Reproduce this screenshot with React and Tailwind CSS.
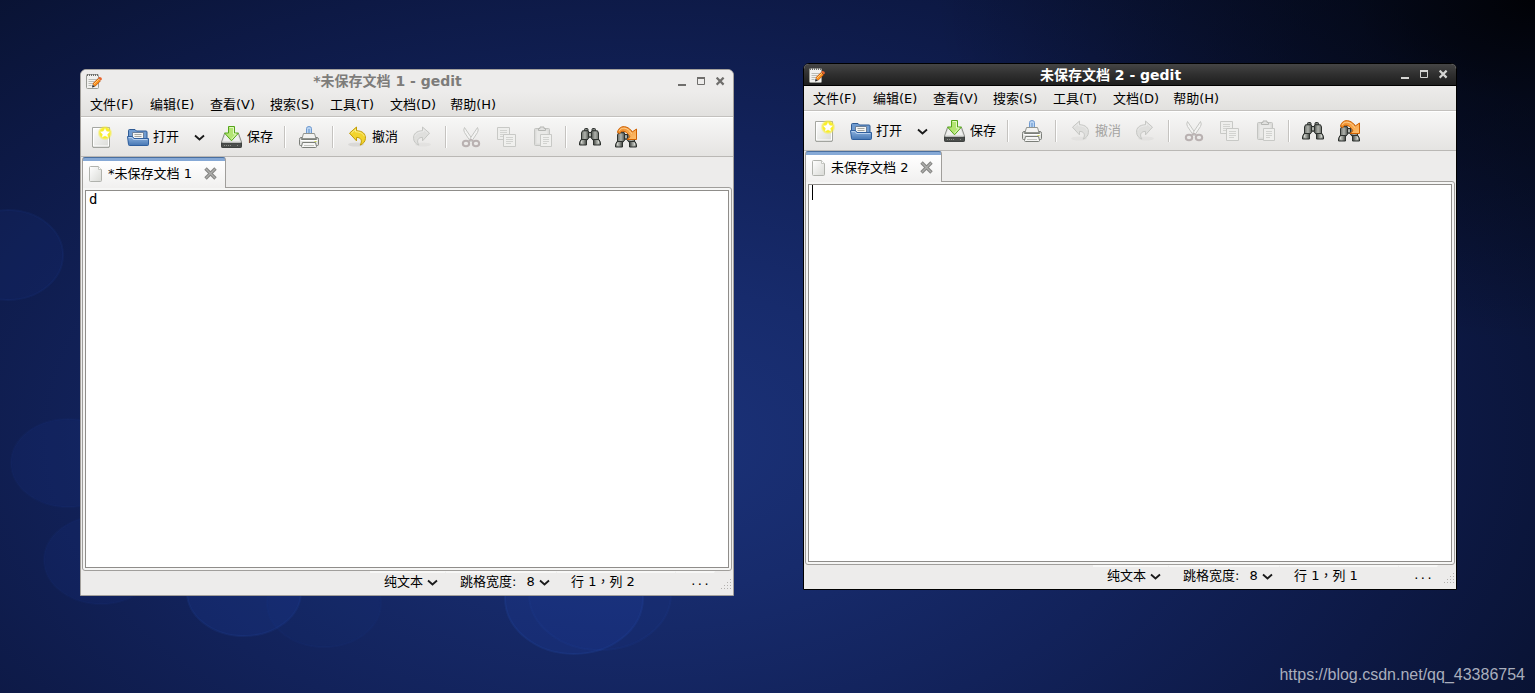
import React, { useState } from 'react';
import clsx from 'clsx';

const MENUS = ['文件(F)', '编辑(E)', '查看(V)', '搜索(S)', '工具(T)', '文档(D)', '帮助(H)'];

function Wallpaper() {
  return (
    <svg className="absolute inset-0 h-full w-full" viewBox="0 0 1535 693" preserveAspectRatio="none" aria-hidden="true">
      <defs>
        <radialGradient id="glow" gradientUnits="userSpaceOnUse" cx="0" cy="0" r="1" gradientTransform="translate(640 440) scale(1060 620)">
          <stop offset="0" stopColor="#1b3279" />
          <stop offset="0.25" stopColor="#172b6c" />
          <stop offset="0.5" stopColor="#12225a" />
          <stop offset="0.75" stopColor="#0d1945" />
          <stop offset="1" stopColor="#08112e" />
        </radialGradient>
        <radialGradient id="corner" gradientUnits="userSpaceOnUse" cx="0" cy="0" r="1" gradientTransform="translate(1535 0) scale(600 340)">
          <stop offset="0" stopColor="#010206" />
          <stop offset="0.3" stopColor="#010206" stopOpacity="0.5" />
          <stop offset="1" stopColor="#010206" stopOpacity="0" />
        </radialGradient>
      </defs>
      <rect width="1535" height="693" fill="url(#glow)" />
      <rect width="1535" height="693" fill="url(#corner)" />
      <g fill="#1d3c96" fillOpacity="0.14" stroke="#2a4fae" strokeOpacity="0.1" strokeWidth="2">
        <ellipse cx="8" cy="255" rx="55" ry="45" />
        <ellipse cx="68" cy="463" rx="57" ry="44" strokeOpacity="0.05" />
        <ellipse cx="101" cy="560" rx="57" ry="44" strokeOpacity="0.05" />
        <ellipse cx="244" cy="592" rx="57" ry="44" fillOpacity="0.25" strokeOpacity="0.15" />
        <ellipse cx="324" cy="603" rx="57" ry="44" fillOpacity="0.08" strokeOpacity="0.05" />
        <ellipse cx="574" cy="598" rx="69" ry="56" fillOpacity="0.3" strokeOpacity="0.2" />
        <ellipse cx="600" cy="594" rx="71" ry="56" />
      </g>
    </svg>
  );
}

function IconDefs() {
  return (
    <svg className="absolute h-0 w-0" aria-hidden="true">
      <defs>
        <linearGradient id="paper" x1="0" y1="0" x2="1" y2="1">
          <stop offset="0" stopColor="#ffffff" />
          <stop offset="1" stopColor="#d9dad6" />
        </linearGradient>
        <radialGradient id="star">
          <stop offset="0" stopColor="#fff800" />
          <stop offset="0.65" stopColor="#f9ef2a" />
          <stop offset="1" stopColor="#f6ec50" stopOpacity="0" />
        </radialGradient>
        <linearGradient id="folder" x1="0" y1="0" x2="0" y2="1">
          <stop offset="0" stopColor="#8fb3de" />
          <stop offset="1" stopColor="#4677b4" />
        </linearGradient>
        <linearGradient id="metal" x1="0" y1="0" x2="1" y2="0">
          <stop offset="0" stopColor="#6c706b" />
          <stop offset="0.45" stopColor="#b0b3ad" />
          <stop offset="1" stopColor="#3e423e" />
        </linearGradient>
        <linearGradient id="orange" x1="0" y1="0" x2="1" y2="1">
          <stop offset="0" stopColor="#f08a24" />
          <stop offset="1" stopColor="#fdc070" />
        </linearGradient>
      </defs>
    </svg>
  );
}

function Icon({ children, size = 24, className }) {
  return (
    <svg width={size} height={size} viewBox={`0 0 ${size} ${size}`} className={clsx('shrink-0', className)} aria-hidden="true">
      {children}
    </svg>
  );
}

const GeditIcon = () => (
  <Icon size={16}>
    <rect x="0.5" y="1.5" width="12" height="14" rx="1" fill="#f1f1ef" stroke="#9a9c96" />
    <path d="M1 2h11" stroke="#6d6d6b" strokeWidth="2" strokeDasharray="1 1" />
    <path d="M2.5 6.5h8M2.5 8.5h6M2.5 10.5h4M2.5 12.5h3" stroke="#b9bbb6" />
    <path d="M7.8 12.2l5.6-5.6" stroke="#b54a00" strokeWidth="4" />
    <path d="M8 12l5.3-5.3" stroke="#fb9422" strokeWidth="2.8" />
    <path d="M7.8 11.2l5-5" stroke="#ffd083" strokeWidth="0.9" />
    <path d="M12.2 5l2.6 2.6 1-1q.3-1.2-.6-2t-2-.6z" fill="#e8642c" />
    <path d="M6 14.4l.6-3 2.4 2.400z" fill="#2a2a2a" />
  </Icon>
);

const NewIcon = () => (
  <Icon>
    <path d="M2.5 2.5h17v19.5h-17z" fill="url(#paper)" stroke="#a5a7a1" />
    <path d="M3.5 3.5h15v17.5h-15z" fill="none" stroke="#fff" />
    <path d="M3 22.5h16" stroke="#7d7f7a" strokeOpacity="0.5" />
    <circle cx="15" cy="8" r="7.5" fill="url(#star)" />
    <path d="M15 2.8l1.7 3.3 3.7.5-2.7 2.6.7 3.7-3.4-1.8-3.4 1.8.7-3.700-2.700-2.600 3.700-.5z" fill="#fff" stroke="#f5ea4a" strokeWidth="0.6" />
  </Icon>
);

const OpenIcon = () => (
  <Icon>
    <path d="M2.5 18V5.5q0-1 1-1h5.5l1.5 1.5h9.5q1 0 1 1V18z" fill="#6f9bd0" stroke="#2f5b94" />
    <path d="M6.5 7.5h11v8h-11z" fill="#f5f5f3" stroke="#6a7f99" />
    <path d="M8.5 9.5h7M8.5 11.5h7" stroke="#a3a5a0" />
    <path d="M1.5 11.5h5l1.5 2h14.5v6q0 1-1 1h-18q-1 0-1-1z" fill="url(#folder)" stroke="#2f5f9e" />
    <path d="M2.500 12.500h3.400l1.500 2h14" fill="none" stroke="#b7d0ee" />
  </Icon>
);

const SaveIcon = () => (
  <Icon>
    <path d="M4.5 8.5h14l3 8.5v4.5q0 1-1 1h-18q-1 0-1-1V17z" fill="#dcdddb" stroke="#898b86" />
    <path d="M5.5 9.5h12l2.3 6.5H3z" fill="#efefee" />
    <path d="M1.5 18h20v3.5q0 1-1 1h-18q-1 0-1-1z" fill="#4b4e4c" stroke="#3e4140" />
    <path d="M2.5 17.5h18" stroke="#b9bbb8" />
    <path d="M4 20.5h8M17 20.5h2" stroke="#8b8e8a" strokeDasharray="1 1" />
    <path d="M8.5 1.5h6v6.5h4l-7 7.8-7-7.8h4z" fill="#b3e573" stroke="#55a51a" />
    <path d="M9.5 2.5h4v6.500h2.700l-4.700 5.300" fill="none" stroke="#e4fac4" />
  </Icon>
);

const PrintIcon = () => (
  <Icon>
    <path d="M9.5 9V3.5q0-2 2.500-2t2.500 2V9z" fill="#b9d4f2" stroke="#6f9ad0" />
    <path d="M12 4v4" stroke="#5f8fca" />
    <path d="M6.5 8.5h11l1.5 5H5z" fill="#f3f3f1" stroke="#92958f" />
    <path d="M2.5 14.5q0-2 1.500-2h1l-.5 2h15l-.5-2h1q1.500 0 1.500 2v5q0 1-1 1h-17q-1 0-1-1z" fill="#e3e4e1" stroke="#7b7e79" />
    <path d="M3.5 15.5h17" stroke="#fff" />
    <path d="M17.5 16.5h2" stroke="#cfd85a" />
    <path d="M5.5 17.5h13l1 4q0 1-1 1h-13q-1 0-1-1z" fill="#f6f6f5" stroke="#7b7e79" />
    <path d="M7 20.5h10" stroke="#c2c4bf" />
  </Icon>
);

const UndoIcon = ({ flip, disabled }) => (
  <Icon className={flip && '-scale-x-100'}>
    <ellipse cx="11" cy="19.5" rx="8" ry="2" fill="#000" fillOpacity={disabled ? 0.03 : 0.07} />
    <path
      d="M4.500 8.200l7-6.200v3.700c6.200.2 9.300 3.300 8.900 7.900-.2 3-2 5.200-5.300 6.500 1.400-2.400 1.700-4.200.8-5.700-.8-1.400-2.200-2-4.400-2v3.500z"
      fill={disabled ? '#dfdfdd' : '#f2d42e'}
      stroke={disabled ? '#c6c7c4' : '#c29c06'}
      strokeLinejoin="round"
    />
    <path d="M6.200 8.200l4.300-3.800v2.400c5 .1 8 2 8.700 4.600" fill="none" stroke={disabled ? '#ebebea' : '#fbef8e'} />
  </Icon>
);

const CutIcon = () => (
  <Icon>
    <path d="M6.5 2.5q-1.500 2.500 0 5l6 9 1.800-2.300z" fill="#f3f3f2" stroke="#c6c7c4" />
    <path d="M19.500 2.500q1.500 2.500 0 5l-6 9-1.800-2.300z" fill="#f3f3f2" stroke="#c6c7c4" />
    <ellipse cx="8" cy="18.5" rx="3.2" ry="2.8" fill="none" stroke="#b9b1b1" strokeWidth="2" />
    <ellipse cx="18" cy="18.5" rx="3.2" ry="2.8" fill="none" stroke="#b9b1b1" strokeWidth="2" />
    <path d="M10.500 16.500l2.500-2 2.500 2" fill="none" stroke="#b9b1b1" strokeWidth="1.5" />
  </Icon>
);

const CopyIcon = () => (
  <Icon>
    <path d="M3.5 2.5h12v12h-12z" fill="#eeeeec" stroke="#c8c9c6" />
    <path d="M6 5.5h7M6 7.5h7M6 9.5h5M6 11.5h5" stroke="#d2d3d0" />
    <path d="M9.5 9.5h12v12h-12z" fill="#f0f0ee" stroke="#c8c9c6" />
    <path d="M12 12.5h7M12 14.5h7M12 16.5h7M12 18.5h5" stroke="#d2d3d0" />
  </Icon>
);

const PasteIcon = () => (
  <Icon>
    <path d="M5.5 3.5h13q1 0 1 1v15q0 1-1 1h-13q-1 0-1-1v-15q0-1 1-1z" fill="#dcdcda" stroke="#c3c4c1" />
    <path d="M6.5 5.5h11v13h-11z" fill="#e9e9e7" />
    <path d="M8.5 5.5v-2h1.500v-1.500h4v1.500h1.500v2z" fill="#e2e2e0" stroke="#b5b6b3" />
    <path d="M10.5 9.5h11v12h-11z" fill="#f0f0ee" stroke="#c8c9c6" />
    <path d="M13 12.5h6M13 14.5h6M13 16.5h6M13 18.5h4" stroke="#d2d3d0" />
  </Icon>
);

const Barrel = () => (
  <>
    <path d="M6.5 6V4.500q0-1 1-1h1.500q1 0 1 1V6z" fill="#7d817c" />
    <path d="M4.500 5.800h5.500l1.200 1.500v5l-2 2.700H3.500V8z" fill="url(#metal)" />
    <path d="M3 14.500h5.500v5.500H1.500v-2.500z" fill="url(#metal)" />
    <path d="M3.5 16v2.5" stroke="#e2e4df" strokeOpacity="0.8" />
  </>
);

const Binoculars = () => (
  <g stroke="#2d312e" strokeLinejoin="round">
    <Barrel />
    <g transform="translate(24 0) scale(-1 1)">
      <Barrel />
    </g>
    <path d="M10.5 7.5h3v4.500h-3z" fill="#8f938d" />
    <path d="M12 8.5v2.5" stroke="#d0d3cd" />
  </g>
);

const FindIcon = () => (
  <Icon>
    <Binoculars />
  </Icon>
);

const ReplaceIcon = () => (
  <Icon>
    <g transform="translate(0 2)">
      <Binoculars />
    </g>
    <path
      d="M3.500 7.500C4 3 8 .7 12 2c3 .9 4.800 2.700 6.200 5l4.300-3v10.500h-9.500l3-2.700c-2-3.500-4.400-5.600-7-5.600-2 0-2.700 1-3 2.300z"
      fill="url(#orange)"
      stroke="#cf6100"
      strokeLinejoin="round"
    />
    <path d="M5.200 5.800C7 2.800 10.500 2.600 13 4c2 1 3.500 2.800 4.700 4.700" fill="none" stroke="#ffdca8" strokeOpacity="0.8" />
  </Icon>
);

const PageIcon = () => (
  <svg width="14" height="16" viewBox="0 0 14 16" className="shrink-0" aria-hidden="true">
    <path d="M1.500.5h8l3 3v11q0 1-1 1h-10q-1 0-1-1v-13q0-1 1-1z" fill="url(#paper)" stroke="#b0b2ad" />
    <path d="M9.500.5v3h3" fill="#fff" stroke="#c4c6c1" />
  </svg>
);

const Chevron = () => (
  <svg width="11" height="7" viewBox="0 0 11 7" className="shrink-0" aria-hidden="true">
    <path d="M1 1.500l4.500 4 4.500-4" fill="none" stroke="#1a1a1a" strokeWidth="1.8" />
  </svg>
);

function TitleBar({ title, active }) {
  const ink = active ? '#d5d5d3' : '#6f6e6c';
  return (
    <header
      className={clsx(
        'flex h-[22px] items-center pr-[3px] pl-[5px]',
        active ? 'border-b border-black bg-linear-to-b from-[#454545] via-[#2f2f2f] to-[#1f1f1f]' : 'bg-[#edeceb]'
      )}
    >
      <GeditIcon />
      <h1 className={clsx('flex-1 text-center text-sm leading-5 font-bold', active ? 'text-white' : 'text-[#7d7c7a]')}>
        {title} - gedit
      </h1>
      <button type="button" aria-label="Minimize" className="flex h-5 w-[19px] items-center justify-center">
        <Icon size={9}>
          <path d="M0 8h8" stroke={ink} strokeWidth="2" />
        </Icon>
      </button>
      <button type="button" aria-label="Maximize" className="flex h-5 w-[19px] items-center justify-center">
        <Icon size={9}>
          <path d="M0 1h8" stroke={ink} strokeWidth="2" />
          <path d="M.5 1v6.500h7V1" fill="none" stroke={ink} />
        </Icon>
      </button>
      <button type="button" aria-label="Close" className="flex h-5 w-[19px] items-center justify-center">
        <Icon size={9}>
          <path d="M.6.6l7 7M7.600.6l-7 7" stroke={ink} strokeWidth="2.2" />
        </Icon>
      </button>
    </header>
  );
}

function MenuBar() {
  return (
    <nav className="flex h-[25px] gap-[14px] border-b border-[#c3c1be] bg-linear-to-b from-[#edeceb] to-[#e2e1df] pt-px pl-[9px]">
      {MENUS.map((label) => (
        <button key={label} type="button" className="min-w-[46px] text-left whitespace-nowrap">
          {label}
        </button>
      ))}
    </nav>
  );
}

function ToolButton({ icon, label, name, disabled }) {
  return (
    <button
      type="button"
      aria-label={name}
      disabled={disabled}
      className={clsx('flex items-center gap-[3px] px-[6px]', disabled && 'text-[#a5a4a2]')}
    >
      {icon}
      {label && <span className="whitespace-nowrap">{label}</span>}
    </button>
  );
}

const Separator = () => (
  <div className="flex w-3 items-center justify-center">
    <div className="h-[22px] w-[2px] border-r border-white bg-[#c5c3c0]" />
  </div>
);

function ToolBar({ canUndo }) {
  return (
    <div className="flex h-10 border-y border-t-white border-b-[#bab8b5] bg-linear-to-b from-[#f7f7f6] to-[#e5e4e2] pl-[3px]">
      <ToolButton icon={<NewIcon />} name="新建" />
      <ToolButton icon={<OpenIcon />} label="打开" />
      <button type="button" aria-label="最近文件" className="flex w-[29px] items-center justify-center">
        <Chevron />
      </button>
      <ToolButton icon={<SaveIcon />} label="保存" />
      <Separator />
      <ToolButton icon={<PrintIcon />} name="打印" />
      <Separator />
      <ToolButton icon={<UndoIcon disabled={!canUndo} />} label="撤消" disabled={!canUndo} />
      <ToolButton icon={<UndoIcon flip disabled />} name="重做" disabled />
      <Separator />
      <ToolButton icon={<CutIcon />} name="剪切" disabled />
      <ToolButton icon={<CopyIcon />} name="复制" disabled />
      <ToolButton icon={<PasteIcon />} name="粘贴" disabled />
      <Separator />
      <ToolButton icon={<FindIcon />} name="查找" />
      <ToolButton icon={<ReplaceIcon />} name="替换" />
    </div>
  );
}

function DocTab({ title }) {
  return (
    <div className="relative z-10 -mb-px flex h-[31px] w-fit items-center rounded-t-[3px] border-t border-r border-l border-t-[#4a6f9f] border-r-[#a09e9b] border-l-[#a09e9b] bg-[linear-gradient(#86a9d6_3px,#ffffff_3px,#f1f0ef)] pt-px pr-2 pl-[6px]">
      <PageIcon />
      <span className="ml-[5px] whitespace-nowrap">{title}</span>
      <button type="button" aria-label="关闭文档" className="ml-3">
        <Icon size={13}>
          <path d="M1.500 1.500l10 10M11.500 1.500l-10 10" stroke="#858583" strokeWidth="3.4" />
          <path d="M2 2l9 9M11 2l-9 9" stroke="#aeaeac" strokeWidth="1.3" />
        </Icon>
      </button>
    </div>
  );
}

function StatusCell({ as: Tag = 'div', className, children }) {
  return (
    <Tag
      className={clsx('flex h-5 items-center border-t-2 border-r border-t-[#f8f8f7] border-r-transparent pl-[14px] whitespace-nowrap', className)}
    >
      {children}
    </Tag>
  );
}

function StatusBar({ column }) {
  return (
    <footer className="relative flex h-6 items-start justify-end pr-[18px] leading-4">
      <StatusCell as="button" className="w-[76px] gap-1">
        纯文本
        <Chevron />
      </StatusCell>
      <StatusCell as="button" className="w-[111px]">
        <span>跳格宽度:</span>
        <span className="mr-1 ml-[10px]">8</span>
        <Chevron />
      </StatusCell>
      <StatusCell className="w-[119px] font-['DejaVu_Sans','Noto_Sans_CJK_TC',sans-serif]">行 1，列 {column}</StatusCell>
      <StatusCell className="w-[39px] font-['DejaVu_Sans_Mono',monospace] text-[11px]">...</StatusCell>
      <svg width="13" height="13" viewBox="0 0 13 13" className="absolute right-0 bottom-1" aria-hidden="true">
        <path d="M10 1.500h3M7 4.500h6M4 7.500h9M1 10.500h12" stroke="#b3b1ae" strokeWidth="1" strokeDasharray="1 2" />
      </svg>
    </footer>
  );
}

function GeditWindow({ title, initialText = '', active, className }) {
  const [text, setText] = useState(initialText);
  return (
    <section
      className={clsx(
        'absolute w-[654px] overflow-hidden rounded-t-md border bg-[#edeceb] text-[13px] text-black',
        active ? 'border-black' : 'border-[#a3a09c]',
        className
      )}
    >
      <TitleBar title={title} active={active} />
      <MenuBar />
      <ToolBar canUndo={!active} />
      <div className="px-px">
        <div className="h-[30px]">
          <DocTab title={title} />
        </div>
        <div className="relative rounded-tr-[3px] rounded-b-[3px] border border-[#a09e9b] bg-[#f6f6f5] p-[2px]">
          <textarea
            aria-label={title}
            spellCheck={false}
            value={text}
            onChange={(e) => setText(e.target.value)}
            className="block h-[378px] w-full resize-none border border-[#8f8d8a] bg-white px-[3px] font-['DejaVu_Sans_Mono',monospace] text-sm leading-4 text-black outline-none"
          />
          {active && <div className="absolute top-[3px] left-[6px] h-[15px] w-px bg-black" />}
        </div>
      </div>
      <StatusBar column={text.length + 1} />
    </section>
  );
}

export default function App() {
  return (
    <main className="relative min-h-screen overflow-hidden bg-[#0d1946] font-['DejaVu_Sans','Noto_Sans_CJK_SC',sans-serif]">
      <Wallpaper />
      <IconDefs />
      <GeditWindow title="*未保存文档 1" initialText="d" className="top-[69px] left-[80px]" />
      <GeditWindow title="未保存文档 2" active className="top-[63px] left-[803px]" />
      <a
        href="https://blog.csdn.net/qq_43386754"
        className="absolute right-[10px] bottom-1.5 font-['Liberation_Sans',sans-serif] text-base leading-6 text-[#a9aebd]"
      >
        https://blog.csdn.net/qq_43386754
      </a>
    </main>
  );
}
